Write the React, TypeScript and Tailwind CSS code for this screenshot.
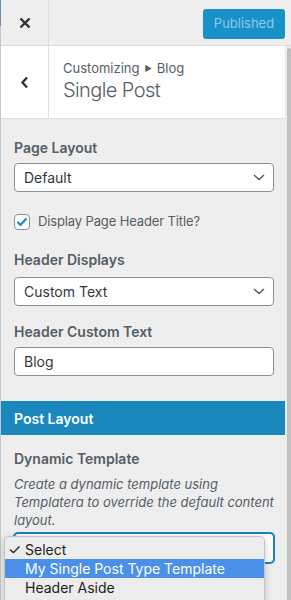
import React from "react";

function Chevron() {
  return (
    <svg width="12" height="7" viewBox="0 0 12 7" className="shrink-0">
      <polyline points="1,1 6,5.5 11,1" fill="none" stroke="#50575e" strokeWidth="1.4" />
    </svg>
  );
}

function SelectBox({ value, extra = "" }: { value: string; extra?: string }) {
  return (
    <div className={`h-[29px] w-[260px] bg-white rounded-[4px] border border-[#8c8f94] flex items-center justify-between pl-[9px] pr-[8px] text-[14px] text-[#32373c] ${extra}`}>
      <span>{value}</span>
      <Chevron />
    </div>
  );
}

export default function App() {
  return (
    <div className="flex w-[291px] h-[600px] overflow-hidden bg-[#eeeeee] relative [font-family:Inter,'Noto_Sans',sans-serif]">
      {/* left edge strip */}
      <div className="w-px flex flex-col shrink-0">
        <div className="h-[26px] bg-[#6f8bab]" />
        <div className="flex-1 bg-[#c6c6c6]" />
      </div>

      <div className="flex-1 flex flex-col">
        {/* top bar */}
        <div className="h-[46px] border-b border-[#dddddd] flex items-stretch shrink-0">
          <div className="w-[48px] border-r border-[#dddddd] flex items-center justify-center">
            <svg width="12" height="12" viewBox="0 0 12 12">
              <line x1="1.5" y1="1.5" x2="10.5" y2="10.5" stroke="#333" strokeWidth="2.4" />
              <line x1="10.5" y1="1.5" x2="1.5" y2="10.5" stroke="#333" strokeWidth="2.4" />
            </svg>
          </div>
          <div className="flex-1" />
          <div className="flex items-start pt-[9px] pr-[6px]">
            <div className="h-[30px] w-[82px] rounded-[3px] bg-[#1791c8] text-[#8ccbea] text-[13px] flex items-center justify-center">
              Published
            </div>
          </div>
        </div>

        {/* body */}
        <div className="flex-1 flex">
          <div className="w-[284px] flex flex-col shrink-0">
            {/* header */}
            <div className="h-[73px] bg-white border-b border-[#dddddd] flex shrink-0">
              <div className="w-[48px] border-r border-[#dddddd] flex items-center justify-center">
                <svg width="9" height="13" viewBox="0 0 9 13" className="mr-px">
                  <polyline points="7,1.5 2.5,6.5 7,11.5" fill="none" stroke="#333" strokeWidth="2.4" />
                </svg>
              </div>
              <div className="flex flex-col justify-center pl-[14px] text-[#555d66] pb-[2px]">
                <div className="text-[13px] leading-[18px] flex items-center">
                  <span>Customizing</span>
                  <span className="text-[8px] mx-[5px]">▶</span>
                  <span>Blog</span>
                </div>
                <div className="text-[20px] leading-[26px] font-light tracking-[-0.03em]">Single Post</div>
              </div>
            </div>

            {/* controls */}
            <div className="flex flex-col pl-[13px] pt-[19px]">
              <div className="text-[14px] leading-5 font-semibold text-[#555d66]">Page Layout</div>
              <SelectBox value="Default" extra="mt-[5px]" />

              <div className="mt-[22px] flex items-center h-[16px]">
                <div className="w-[16px] h-[16px] rounded-[4px] border border-[#8c8f94] bg-white flex items-center justify-center">
                  <svg width="12" height="10" viewBox="0 0 12 10">
                    <polyline points="1.5,5 4.5,8 10.5,1.5" fill="none" stroke="#1e8cbe" strokeWidth="2.2" />
                  </svg>
                </div>
                <span className="ml-[8px] text-[13px] text-[#555d66] tracking-[-0.01em]">Display Page Header Title?</span>
              </div>

              <div className="mt-[20px] text-[14px] leading-5 font-semibold text-[#555d66]">Header Displays</div>
              <SelectBox value="Custom Text" extra="mt-[7px]" />

              <div className="mt-[16px] text-[14px] leading-5 font-semibold text-[#555d66]">Header Custom Text</div>
              <div className="mt-[5px] h-[29px] w-[260px] bg-white rounded-[4px] border border-[#8c8f94] flex items-center pl-[9px] text-[14px] text-[#32373c]">
                Blog
              </div>
            </div>

            <div className="mt-[25px] h-[34px] bg-[#1a88bc] flex items-center pl-[13px] text-white text-[14px] font-semibold shrink-0">
              Post Layout
            </div>

            <div className="flex flex-col pl-[13px] pt-[14px]">
              <div className="text-[14px] leading-5 font-semibold text-[#555d66]">Dynamic Template</div>
              <div className="mt-[6px] text-[13px] leading-[18px] italic text-[#555d66] pr-[10px]">
                Create a dynamic template using Templatera to override the default content layout.
              </div>
              <div className="mt-[4px] h-[30px] w-[260px] bg-white rounded-[4px] border border-[#1a7fbd] ring-1 ring-[#1a7fbd] flex items-center justify-end pr-[8px]">
                <Chevron />
              </div>
            </div>
          </div>

          {/* scrollbar track */}
          <div className="flex-1 flex bg-[#ebebeb]">
            <div className="ml-[2px] mt-[2px] w-[3px] flex-1 rounded-t-[2px] bg-[#c1c1c1]" />
          </div>
        </div>
      </div>

      {/* open dropdown list */}
      <div className="absolute left-[4px] top-[536px] w-[261px] h-[80px] bg-[#ececec] border border-[#c4c4c4] rounded-[5px] shadow-[0_2px_8px_rgba(0,0,0,0.2)] pt-[3px] text-[14px] text-[#1d1d1d] leading-[19px]">
        <div className="h-[19px] flex items-center">
          <span className="w-[20px] pl-[3px] text-[15px]">✓</span>
          <span>Select</span>
        </div>
        <div className="h-[19px] flex items-center bg-[#4a90e9] text-white pl-[20px]">
          My Single Post Type Template
        </div>
        <div className="h-[19px] flex items-center pl-[20px]">Header Aside</div>
      </div>
    </div>
  );
}
